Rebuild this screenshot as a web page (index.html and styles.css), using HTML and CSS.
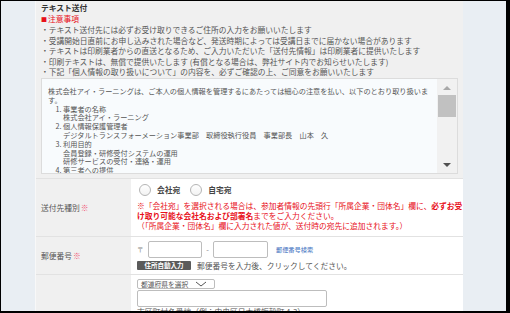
FILE: index.html
```html
<!DOCTYPE html>
<html lang="ja">
<head>
<meta charset="utf-8">
<title>テキスト送付</title>
<link rel="stylesheet" href="styles.css">
</head>
<body>
<div class="screen">
  <div class="panel">
    <section class="notice">
      <h2 class="title">テキスト送付</h2>
      <p class="caution"><span class="sq">■</span>注意事項</p>
      <ul class="bullets">
        <li>・テキスト送付先には必ずお受け取りできるご住所の入力をお願いいたします</li>
        <li>・受講開始日直前にお申し込みされた場合など、発送時期によっては受講日までに届かない場合があります</li>
        <li>・テキストは印刷業者からの直送となるため、ご入力いただいた「送付先情報」は印刷業者に提供いたします</li>
        <li>・印刷テキストは、無償で提供いたします (有償となる場合は、弊社サイト内でお知らせいたします)</li>
        <li>・下記「個人情報の取り扱いについて」の内容を、必ずご確認の上、ご同意をお願いいたします</li>
      </ul>
      <div class="policy">
        <div class="policy-body">
          <p>株式会社アイ・ラーニングは、ご本人の個人情報を管理するにあたっては細心の注意を払い、以下のとおり取り扱いま<br>す。</p>
          <ol class="policy-list">
            <li>事業者の名称<br>株式会社アイ・ラーニング</li>
            <li>個人情報保護管理者<br>デジタルトランスフォーメーション事業部　取締役執行役員　事業部長　山本　久</li>
            <li>利用目的<br>会員登録・研修受付システムの運用<br>研修サービスの受付・連絡・運用</li>
            <li>第三者への提供</li>
          </ol>
        </div>
        <div class="scrollbar">
          <svg class="arrow" width="10" height="6" viewBox="0 0 10 6"><polygon points="1,5 5,1 9,5" fill="#a8a8a8"/></svg>
          <div class="thumb"></div>
          <div class="spacer"></div>
          <svg class="arrow" width="10" height="6" viewBox="0 0 10 6"><polygon points="1,1 9,1 5,5" fill="#505050"/></svg>
        </div>
      </div>
    </section>

    <div class="form">
      <div class="row row-type">
        <div class="label">送付先種別 <span class="req">※</span></div>
        <div class="value">
          <div class="radios">
            <span class="radio"></span><span class="radio-text">会社宛</span>
            <span class="radio"></span><span class="radio-text">自宅宛</span>
          </div>
          <p class="warn">※「会社宛」を選択される場合は、参加者情報の先頭行「所属企業・団体名」欄に、<b>必ずお受<br>け取り可能な会社名および部署名</b>までをご入力ください。<br>（「所属企業・団体名」欄に入力された値が、送付時の宛先に追加されます。）</p>
        </div>
      </div>
      <div class="row row-zip">
        <div class="label">郵便番号<span class="req">※</span></div>
        <div class="value">
          <div class="zip-line">
            <span class="zip-mark">〒</span>
            <span class="input zip1"></span>
            <span class="dash">-</span>
            <span class="input zip2"></span>
            <span class="zip-link">郵便番号検索</span>
          </div>
          <div class="auto-line">
            <span class="btn">住所自動入力</span>
            <span class="hint">郵便番号を入力後、クリックしてください。</span>
          </div>
        </div>
      </div>
      <div class="row row-addr">
        <div class="label"></div>
        <div class="value">
          <div class="select">都道府県を選択
            <svg width="12" height="6" viewBox="0 0 12 6"><polyline points="1,1 6,5 11,1" fill="none" stroke="#555" stroke-width="1"/></svg>
          </div>
          <span class="input addr"></span>
          <p class="addr-note">市区町村名番地（例：中央区日本橋蛎殻町 4-3）</p>
        </div>
      </div>
    </div>
  </div>
</div>
</body>
</html>
```

FILE: styles.css
```css
* { box-sizing: border-box; }
html, body { margin: 0; padding: 0; }
body {
  background: #000;
  font-family: "Noto Sans CJK JP", "Noto Sans", sans-serif;
  color: #555;
}
.screen {
  margin: 1px 4px 2px 1px;
  width: 505px;
  height: 310px;
  background: #e9eef3;
  overflow: hidden;
  display: flex;
}
.panel {
  margin-left: 34px;
  width: 428px;
  background: #f0f0f0;
  border-left: 1px solid #f8f8f8;
  display: flex;
  flex-direction: column;
}
.notice {
  padding: 2px 5px 0 5px;
  font-size: 7.75px;
  line-height: 10.5px;
}
.title {
  margin: 0;
  font-size: 7.75px;
  font-weight: bold;
  color: #333;
  line-height: 10.5px;
}
.caution {
  margin: 0;
  color: #e8101a;
}
.sq { font-size: 6px; margin-right: 1px; }
.bullets {
  list-style: none;
  margin: 0;
  padding: 0;
  white-space: nowrap;
}
.policy {
  margin-top: 0;
  width: 417px;
  height: 96px;
  border: 1px solid #dcdcdc;
  background: #f8fbfd;
  display: flex;
}
.policy-body {
  flex: 1;
  overflow: hidden;
  padding: 8.5px 4px 0 6px;
  font-size: 7.2px;
  line-height: 8.8px;
  white-space: nowrap;
}
.policy-body p { margin: 0; }
.policy-list {
  margin: 0;
  padding-left: 15px;
}
.scrollbar {
  width: 20px;
  background: #f1f1f1;
  display: flex;
  flex-direction: column;
  align-items: center;
  padding: 6px 0 5px;
}
.arrow { display: block; }
.thumb {
  margin-top: 4px;
  width: 18px;
  height: 22px;
  background: #c1c1c1;
}
.spacer { flex: 1; }

.form {
  margin-top: 4px;
  background: #fff;
}
.row {
  display: flex;
  border-top: 1px solid #e2e2e2;
}
.label {
  width: 95px;
  flex: none;
  background: #f0f0f0;
  padding-left: 5px;
  display: flex;
  align-items: center;
  font-size: 7.75px;
  color: #555;
}
.req { color: #f05a78; margin-left: 1px; }
.value {
  flex: 1;
  padding-left: 6px;
  font-size: 7.75px;
}
.row-type { height: 58px; }
.row-type .value { padding-top: 5px; }
.radios {
  display: flex;
  align-items: center;
  height: 12px;
  padding-left: 2px;
}
.radio {
  width: 12px;
  height: 12px;
  border: 1px solid #b5b5b5;
  border-radius: 50%;
  background: linear-gradient(#fff, #f2f2f2);
}
.radio-text {
  margin: 0 10px 0 6px;
  font-weight: bold;
  color: #444;
  font-size: 7.75px;
}
.warn {
  margin: 5px 0 0;
  color: #e8101a;
  line-height: 10px;
  white-space: nowrap;
}
.warn b { font-weight: bold; }

.row-zip { height: 38px; }
.row-zip .value { padding-top: 4px; }
.zip-line {
  display: flex;
  align-items: center;
  height: 17px;
}
.zip-mark { width: 11px; color: #888; font-size: 6.5px; }
.input {
  display: block;
  height: 17px;
  border: 1px solid #bdbdbd;
  border-radius: 2px;
  background: #fff;
}
.zip1 { width: 54px; }
.zip2 { width: 55px; }
.dash { width: 11px; text-align: center; color: #888; }
.zip-link { margin-left: 8px; color: #3d6fc0; font-size: 6.2px; }
.auto-line {
  display: flex;
  align-items: center;
  margin-top: 3px;
  height: 9px;
}
.btn {
  width: 54px;
  height: 9px;
  background: #5b5b5b;
  color: #fff;
  font-size: 6.5px;
  font-weight: bold;
  line-height: 9px;
  text-align: center;
  border-radius: 1px;
}
.hint { margin-left: 6px; color: #555; }

.row-addr { flex: 1; }
.row-addr .value { padding-top: 4px; }
.select {
  width: 78px;
  height: 10px;
  border: 1px solid #bdbdbd;
  border-radius: 2px;
  font-size: 6.75px;
  line-height: 8px;
  padding-left: 3px;
  display: flex;
  align-items: center;
  gap: 7px;
  color: #555;
}
.addr { width: 190px; margin-top: 1px; }
.addr-note { margin: 0; line-height: 10px; color: #555; }
```
